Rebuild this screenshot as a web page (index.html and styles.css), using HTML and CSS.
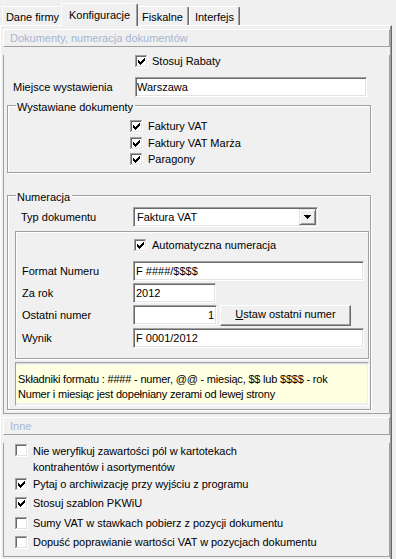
FILE: index.html
```html
<!DOCTYPE html>
<html lang="pl">
<head>
<meta charset="utf-8">
<title>Konfiguracje</title>
<link rel="stylesheet" href="styles.css">
</head>
<body>
<svg class="defs" width="0" height="0" aria-hidden="true">
  <symbol id="box" viewBox="0 0 13 13">
    <path fill="#a0a0a0" d="M0 0h12v1H1v11H0z"/>
    <path fill="#696969" d="M1 1h10v1H2v9H1z"/>
    <path fill="#ffffff" d="M12 0h1v13H0v-1h12z"/>
    <path fill="#e3e3e3" d="M11 1h1v11H1v-1h10z"/>
    <rect x="2" y="2" width="9" height="9" fill="#ffffff"/>
  </symbol>
  <symbol id="boxchk" viewBox="0 0 13 13">
    <use href="#box"/>
    <path fill="#000" d="M3 5h1v3H3zM4 6h1v3H4zM5 7h1v3H5zM6 6h1v3H6zM7 5h1v3H7zM8 4h1v3H8zM9 3h1v3H9z"/>
  </symbol>
</svg>

<div class="tabs">
  <div class="tab t1">Dane firmy</div>
  <div class="tab active">Konfiguracje</div>
  <div class="tab t3">Fiskalne</div>
  <div class="tab t4">Interfejs</div>
</div>

<div class="sheet">
  <div class="panel">
    <div class="phead">Dokumenty, numeracja dokumentów</div>
    <div class="pbody main">
      <div class="chk rabaty"><svg class="cb"><use href="#boxchk"/></svg><span>Stosuj Rabaty</span></div>
      <div class="frow miejsce"><span class="lbl">Miejsce wystawienia</span><div class="edit w-miejsce">Warszawa</div></div>

      <div class="group wyst">
        <div class="legend">Wystawiane dokumenty</div>
        <div class="chk c1"><svg class="cb"><use href="#boxchk"/></svg><span>Faktury VAT</span></div>
        <div class="chk c2"><svg class="cb"><use href="#boxchk"/></svg><span>Faktury VAT Marża</span></div>
        <div class="chk c3"><svg class="cb"><use href="#boxchk"/></svg><span>Paragony</span></div>
      </div>

      <div class="group numer">
        <div class="legend">Numeracja</div>
        <div class="frow typ">
          <span class="lbl">Typ dokumentu</span>
          <div class="combo"><span class="ctext">Faktura VAT</span><span class="dd"><svg width="7" height="4" viewBox="0 0 7 4"><path fill="#000" d="M0 0h7v1H6v1H5v1H4v1H3V3H2V2H1V1H0z"/></svg></span></div>
        </div>
        <div class="inner">
          <div class="chk auto"><svg class="cb"><use href="#boxchk"/></svg><span>Automatyczna numeracja</span></div>
          <div class="frow ir first"><span class="lbl">Format Numeru</span><div class="edit w-long">F ####/$$$$</div></div>
          <div class="frow ir"><span class="lbl">Za rok</span><div class="edit w-rok">2012</div></div>
          <div class="frow ir ost"><span class="lbl">Ostatni numer</span><div class="edit w-ost right">1</div><div class="btn"><span class="u">U</span>staw ostatni numer</div></div>
          <div class="frow ir wyn"><span class="lbl">Wynik</span><div class="edit w-long">F 0001/2012</div></div>
        </div>
        <div class="note">
          <div class="note-in">Składniki formatu : #### - numer, @@ - miesiąc, $$ lub $$$$ - rok<br>Numer i miesiąc jest dopełniany zerami od lewej strony</div>
        </div>
      </div>
    </div>
  </div>

  <div class="panel inne">
    <div class="phead">Inne</div>
    <div class="pbody other">
      <div class="chk ochk o1"><svg class="cb"><use href="#box"/></svg><span class="wrap">Nie weryfikuj zawartości pól w kartotekach<br>kontrahentów i asortymentów</span></div>
      <div class="chk ochk o2"><svg class="cb"><use href="#boxchk"/></svg><span>Pytaj o archiwizację przy wyjściu z programu</span></div>
      <div class="chk ochk o3"><svg class="cb"><use href="#boxchk"/></svg><span>Stosuj szablon PKWiU</span></div>
      <div class="chk ochk o4"><svg class="cb"><use href="#box"/></svg><span>Sumy VAT w stawkach pobierz z pozycji dokumentu</span></div>
      <div class="chk ochk o5"><svg class="cb"><use href="#box"/></svg><span>Dopuść poprawianie wartości VAT w pozycjach dokumentu</span></div>
    </div>
  </div>
</div>
</body>
</html>
```

FILE: styles.css
```css
* { box-sizing: border-box; }

html, body {
  margin: 0;
  padding: 0;
}

body {
  width: 396px;
  height: 559px;
  overflow: hidden;
  background: #f0f0f0;
  color: #000;
  font-family: "Liberation Sans", Arial, sans-serif;
  font-size: 11px;
  line-height: 13px;
}

.defs { position: absolute; width: 0; height: 0; overflow: hidden; }

/* ---------- tabs ---------- */
.tabs {
  display: flex;
  align-items: flex-end;
  height: 25px;
  padding-left: 2px;
}

.tab {
  height: 19px;
  padding-top: 4px;
  text-align: center;
  white-space: nowrap;
  background: #f0f0f0;
  border-top: 1px solid #fff;
  border-left: 1px solid #fff;
  border-right: 1px solid #696969;
  box-shadow: inset -1px 0 #a0a0a0;
  border-radius: 2px 2px 0 0;
}

.t1 { width: 61px; }
.t3 { width: 53px; }
.t4 { width: 51px; }

.tab.active {
  width: 77px;
  height: 23px;
  padding-top: 5px;
  margin: 0 -2px -1px;
  position: relative;
  z-index: 1;
}

/* ---------- sheet ---------- */
.sheet {
  width: 392px;
  height: 534px;
  border-top: 1px solid #fff;
  border-left: 1px solid #fff;
  border-right: 1px solid #696969;
  box-shadow: inset -1px 0 #a0a0a0;
  padding: 3px 1px 0 2px;
}

.phead {
  height: 18px;
  border: 1px solid;
  border-color: #fff #a0a0a0 #a0a0a0 #fff;
  color: #a4b6d2;
  padding-left: 6px;
  line-height: 16px;
}

.pbody {
  border: 1px solid #a0a0a0;
  border-top: 0;
}

.main { padding-bottom: 3px; }
.inne { margin-top: 3px; }
.other { padding-bottom: 7px; letter-spacing: -0.05px; }

/* ---------- checkbox rows ---------- */
.chk {
  display: flex;
  align-items: flex-start;
  height: 13px;
  white-space: nowrap;
}

.cb {
  width: 13px;
  height: 13px;
  flex: none;
  margin-right: 4px;
}

.rabaty { margin-top: 8px; padding-left: 131px; }

/* ---------- field rows ---------- */
.frow {
  display: flex;
  align-items: center;
  height: 20px;
}

.lbl { flex: none; white-space: nowrap; }

.miejsce { margin-top: 9px; padding-left: 9px; }
.miejsce .lbl { width: 122px; }

.edit {
  height: 20px;
  background: #fff;
  border: 1px solid;
  border-color: #a0a0a0 #fff #fff #a0a0a0;
  box-shadow: inset 1px 1px #696969, inset -1px -1px #e3e3e3;
  padding: 0 2px;
  line-height: 18px;
  white-space: nowrap;
}

.edit.right { text-align: right; padding-right: 2px; }

.w-miejsce { width: 232px; padding-left: 1px; }
.w-long { width: 231px; }
.w-rok { width: 83px; }
.w-ost { width: 84px; }

/* ---------- group boxes ---------- */
.group {
  position: relative;
  margin-left: 3px;
  width: 364px;
  border: 1px solid #a0a0a0;
  box-shadow: inset 1px 1px #fff, 1px 1px #fff;
}

.legend {
  position: absolute;
  top: -5px;
  left: 8px;
  padding: 0 2px 0 1px;
  background: #f0f0f0;
  white-space: nowrap;
}

.wyst {
  margin-top: 8px;
  padding: 14px 0 6px 122px;
}
.wyst .cb { margin-right: 5px; }
.wyst .c2 { margin-top: 4px; }
.wyst .c3 { margin-top: 3px; }

.numer {
  margin-top: 22px;
  padding-bottom: 3px;
}

.typ { margin-top: 11px; padding-left: 13px; }
.typ .lbl { width: 112px; }

.combo {
  display: flex;
  align-items: center;
  width: 185px;
  height: 20px;
  background: #fff;
  border: 1px solid;
  border-color: #a0a0a0 #fff #fff #a0a0a0;
  box-shadow: inset 1px 1px #696969, inset -1px -1px #e3e3e3;
  padding: 1px;
}

.ctext { flex: 1; padding-left: 2px; line-height: 16px; }

.dd {
  display: flex;
  align-items: center;
  justify-content: center;
  width: 17px;
  height: 16px;
  background: #f0f0f0;
  border: 1px solid;
  border-color: #e3e3e3 #696969 #696969 #e3e3e3;
  box-shadow: inset 1px 1px #fff, inset -1px -1px #a0a0a0;
  padding-bottom: 1px;
}

.inner {
  margin: 4px 0 0 7px;
  width: 354px;
  border: 1px solid #a0a0a0;
  box-shadow: inset 1px 1px #fff, 1px 1px #fff;
  padding: 7px 0 10px 0;
}

.auto { padding-left: 118px; }
.auto .cb { margin-right: 5px; }

.ir { padding-left: 6px; margin-top: 2px; }
.ir .lbl { width: 111px; }
.ir.first { margin-top: 9px; }
.ost { height: 21px; align-items: flex-start; }
.ost .lbl { margin-top: 4px; }

.btn {
  margin-left: 3px;
  width: 131px;
  height: 21px;
  text-align: center;
  line-height: 17px;
  background: #f0f0f0;
  border: 1px solid;
  border-color: #fff #696969 #696969 #fff;
  box-shadow: inset -1px -1px #a0a0a0, inset 1px 1px #f0f0f0;
  white-space: nowrap;
}

.u { text-decoration: underline; }

.note {
  margin: 3px 0 0 7px;
  width: 354px;
  height: 44px;
  border: 1px solid;
  border-color: #a0a0a0 #fff #fff #a0a0a0;
  box-shadow: inset 1px 1px #e3e3e3;
  padding: 2px 1px 2px 0;
}

.note-in {
  height: 38px;
  background: #ffffe1;
  padding: 7px 0 0 2px;
  line-height: 15px;
  letter-spacing: -0.2px;
  white-space: nowrap;
}

/* ---------- Inne ---------- */
.ochk { padding-left: 11px; }
.ochk .cb { margin-right: 5px; }

.o1 {
  height: 32px;
  margin-top: 8px;
}
.o1 .cb { margin-top: 1px; }
.o1 .wrap { line-height: 16px; }

.o2 { margin-top: 3px; }
.o3 { margin-top: 6px; }
.o4 { margin-top: 7px; }
.o5 { margin-top: 6px; }
```
